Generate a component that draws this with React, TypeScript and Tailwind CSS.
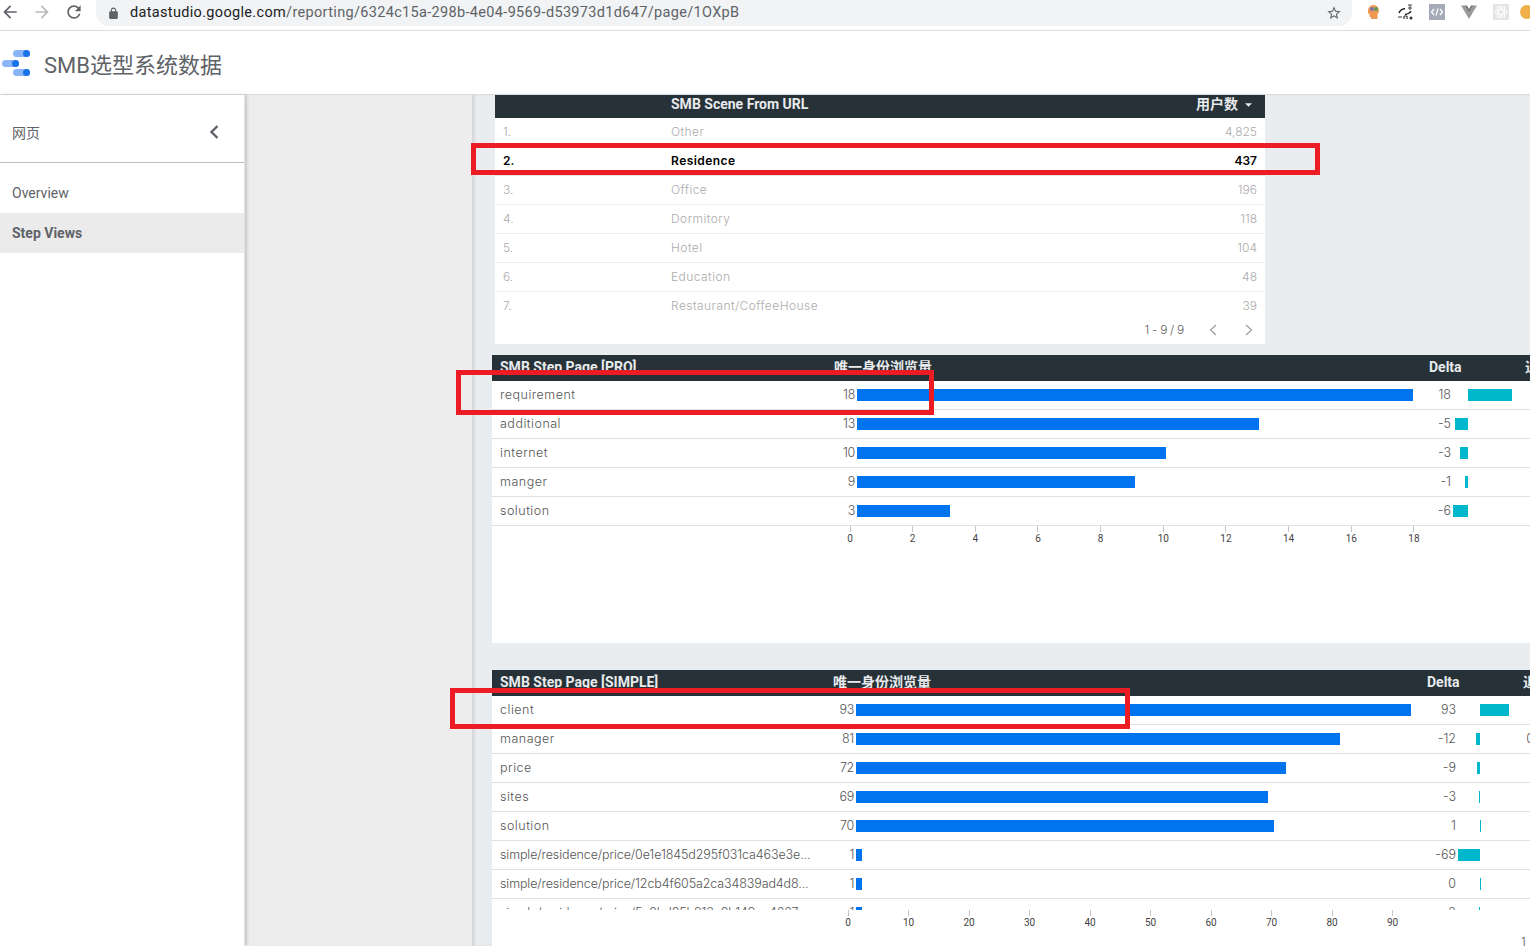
import React from "react";

type SceneRow = { rank: string; name: string; value: string };
type StepRow = { name: string; value: number; delta: number; extra?: string };

const cellFont = "font-['Inter','Noto_Sans',sans-serif] font-light";
const headFont =
  "font-['Roboto','Noto_Sans_CJK_SC',sans-serif] font-bold text-[14px] text-[#e8eaed]";

const sceneRows: SceneRow[] = [
  { rank: "1.", name: "Other", value: "4,825" },
  { rank: "2.", name: "Residence", value: "437" },
  { rank: "3.", name: "Office", value: "196" },
  { rank: "4.", name: "Dormitory", value: "118" },
  { rank: "5.", name: "Hotel", value: "104" },
  { rank: "6.", name: "Education", value: "48" },
  { rank: "7.", name: "Restaurant/CoffeeHouse", value: "39" },
];

const proRows: StepRow[] = [
  { name: "requirement", value: 18, delta: 18 },
  { name: "additional", value: 13, delta: -5 },
  { name: "internet", value: 10, delta: -3 },
  { name: "manger", value: 9, delta: -1 },
  { name: "solution", value: 3, delta: -6 },
];

const simpleRows: StepRow[] = [
  { name: "client", value: 93, delta: 93 },
  { name: "manager", value: 81, delta: -12, extra: "0" },
  { name: "price", value: 72, delta: -9 },
  { name: "sites", value: 69, delta: -3 },
  { name: "solution", value: 70, delta: 1 },
  { name: "simple/residence/price/0e1e1845d295f031ca463e3e...", value: 1, delta: -69 },
  { name: "simple/residence/price/12cb4f605a2ca34839ad4d8...", value: 1, delta: 0 },
  { name: "simple/residence/price/5c0bd05b813c0b149ca4667...", value: 1, delta: -2 },
];

const Material = ({ d, className }: { d: string; className: string }) => (
  <svg viewBox="0 0 24 24" className={className} fill="currentColor">
    <path d={d} />
  </svg>
);

const ChromeBar = () => (
  <div className="flex h-[31px] shrink-0 items-start border-b border-[#dadce0] bg-white">
    <Material
      className="mt-[2px] h-[20px] w-[20px] shrink-0 text-[#5f6368]"
      d="M20 11H7.83l5.59-5.59L12 4l-8 8 8 8 1.41-1.41L7.83 13H20v-2z"
    />
    <Material
      className="mt-[2px] ml-[12px] h-[20px] w-[20px] shrink-0 text-[#b8babd]"
      d="M12 4l-1.41 1.41L16.17 11H4v2h12.17l-5.58 5.59L12 20l8-8z"
    />
    <Material
      className="mt-[2px] ml-[12px] h-[20px] w-[20px] shrink-0 text-[#5f6368]"
      d="M17.65 6.35A7.958 7.958 0 0 0 12 4c-4.42 0-7.99 3.58-7.99 8s3.57 8 7.99 8c3.73 0 6.84-2.55 7.73-6h-2.08A5.99 5.99 0 0 1 12 18c-3.31 0-6-2.69-6-6s2.69-6 6-6c1.66 0 3.14.69 4.22 1.78L13 11h7V4l-2.35 2.35z"
    />
    <div className="ml-[12px] flex h-[26px] w-[1256px] shrink-0 items-center rounded-b-[13px] bg-[#f1f3f4] pr-[10px] pl-[11px]">
      <Material
        className="h-[13px] w-[13px] text-[#5f6368]"
        d="M18 8h-1V6c0-2.76-2.24-5-5-5S7 3.24 7 6v2H6c-1.1 0-2 .9-2 2v10c0 1.1.9 2 2 2h12c1.1 0 2-.9 2-2V10c0-1.1-.9-2-2-2zM9 6c0-1.66 1.34-3 3-3s3 1.34 3 3v2H9V6z"
      />
      <span className="ml-[10px] flex-1 font-['Roboto',sans-serif] text-[14.5px] tracking-[0.33px] whitespace-nowrap text-[#5f6368]">
        <span className="text-[#202124]">datastudio.google.com</span>
        /reporting/6324c15a-298b-4e04-9569-d53973d1d647/page/1OXpB
      </span>
      <Material
        className="h-[16px] w-[16px] text-[#5f6368]"
        d="M22 9.24l-7.19-.62L12 2 9.19 8.63 2 9.24l5.46 4.73L5.82 21 12 17.27 18.18 21l-1.63-7.03L22 9.24zM12 15.4l-3.76 2.27 1-4.28-3.32-2.88 4.38-.38L12 6.1l1.71 4.04 4.38.38-3.32 2.88 1 4.28L12 15.4z"
      />
    </div>
    <ExtensionIcons />
  </div>
);

const ExtensionIcons = () => (
  <div className="mt-[4px] ml-[13px] flex items-center gap-[16px]">
    <svg viewBox="0 0 16 16" className="h-[16px] w-[16px] shrink-0">
      <path d="M3 7c0-3.500 2.500-6 5.500-6S14 3.500 14 6.500c0 2-1 3-1.500 4V15H6v-2H4.500V10L3 9.500z" fill="#ee9a52" />
      <circle cx="7" cy="5" r="2" fill="#7d6fb0" />
      <circle cx="11" cy="5" r="2" fill="#5b9a57" />
    </svg>
    <svg viewBox="0 0 16 16" className="h-[16px] w-[16px] shrink-0" fill="none">
      <path d="M2 9c1-3 3-4 6-4.500M14 7c-1 2-3 3-6 3.500" stroke="#222" strokeWidth="1.500" />
      <path d="M11 1h4M13 1v5M11 4h4" stroke="#444" strokeWidth="1" />
      <path d="M1 13h4M7 12v3M10 12v3M7 12h3" stroke="#333" strokeWidth="1.200" />
      <circle cx="14" cy="14" r="1.500" fill="#333" />
    </svg>
    <svg viewBox="0 0 16 16" className="h-[16px] w-[16px] shrink-0" fill="none">
      <rect width="16" height="16" fill="#a5abb8" />
      <path d="M5 5L2.500 8 5 11M11 5l2.500 3L11 11M9 4.500L7 11.500" stroke="#fff" strokeWidth="1.200" />
    </svg>
    <svg viewBox="0 0 16 16" className="h-[16px] w-[16px] shrink-0">
      <path d="M0 1.500h3.500L8 9l4.500-7.500H16L8 15z" fill="#9a9a9a" />
      <path d="M3.500 1.500h2.500L8 5l2-3.500h2.500L8 9z" fill="#777" />
    </svg>
    <svg viewBox="0 0 16 16" className="h-[16px] w-[16px] shrink-0" fill="none">
      <rect width="16" height="16" fill="#e4e4e4" />
      <ellipse cx="8" cy="8" rx="6" ry="2.500" stroke="#fff" />
      <ellipse cx="8" cy="8" rx="6" ry="2.500" stroke="#fff" transform="rotate(60 8 8)" />
      <ellipse cx="8" cy="8" rx="6" ry="2.500" stroke="#fff" transform="rotate(120 8 8)" />
    </svg>
    <svg viewBox="0 0 16 16" className="-ml-[6px] h-[16px] w-[16px] shrink-0">
      <circle cx="8" cy="8" r="7" fill="#efb04a" />
    </svg>
  </div>
);

const Logo = () => (
  <svg viewBox="0 0 30 28" className="h-[28px] w-[30px]">
    <rect x="13" y="1" width="17" height="7" rx="3.500" fill="#8ab4f8" />
    <circle cx="26.500" cy="4.500" r="3.500" fill="#1a73e8" />
    <rect x="2" y="11" width="17" height="7" rx="3.500" fill="#8ab4f8" />
    <circle cx="15.500" cy="14.500" r="3.500" fill="#1a73e8" />
    <rect x="13" y="20" width="17" height="7" rx="3.500" fill="#8ab4f8" />
    <circle cx="26.500" cy="23.500" r="3.500" fill="#1a73e8" />
  </svg>
);

const ReportHeader = () => (
  <div className="flex h-[64px] shrink-0 items-center border-b border-[#dadce0] bg-white">
    <Logo />
    <h1 className="mt-[6px] ml-[14px] font-['Roboto','Noto_Sans_CJK_SC',sans-serif] text-[22px] font-normal text-[#5f6368]">
      SMB选型系统数据
    </h1>
  </div>
);

const Sidebar = () => (
  <aside className="relative z-10 w-[245px] shrink-0 border-r border-[#e2e2e2] bg-white font-['Roboto','Noto_Sans_CJK_SC',sans-serif] text-[14px] text-[#5f6368] shadow-[2px_0_3px_rgba(0,0,0,0.16)]">
    <div className="flex h-[68px] items-center justify-between border-b border-[#bdbdbd] pt-[8px] pr-[24px] pl-[12px]">
      <span className="translate-y-[1px]">网页</span>
      <svg viewBox="0 0 12 16" className="h-[16px] w-[12px] -translate-y-[1px]" fill="none">
        <path d="M9.500 2L3.500 8l6 6" stroke="#5f6368" strokeWidth="2.400" />
      </svg>
    </div>
    <div className="mt-[10px] flex h-[40px] items-center pl-[12px]">Overview</div>
    <div className="flex h-[40px] items-center bg-[#ebebeb] pl-[12px] font-bold">Step Views</div>
  </aside>
);

const SceneTable = () => (
  <section className="ml-[22px] w-[770px] bg-white">
    <div className={`flex h-[23px] items-center bg-[#263238] pb-[4px] ${headFont}`}>
      <span className="ml-[176px] flex-1">SMB Scene From URL</span>
      <span>用户数</span>
      <svg viewBox="0 0 8 4" className="mr-[13px] ml-[7px] h-[4px] w-[7px]">
        <path d="M0 0h8L4 4z" fill="#e8eaed" />
      </svg>
    </div>
    {sceneRows.map((row, i) => (
      <div
        key={row.rank}
        className={`flex h-[29px] items-center border-b px-[8px] text-[12px] ${
          i === 1
            ? "border-[#e6e6e6] font-['Inter',sans-serif] font-semibold text-black"
            : `${cellFont} ${i === 6 ? "border-transparent" : "border-[#eeeeee]"} text-[#ababab]`
        }`}
      >
        <span className="w-[168px]">{row.rank}</span>
        <span className="flex-1 tracking-[0.45px]">{row.name}</span>
        <span>{row.value}</span>
      </div>
    ))}
    <div className={`flex h-[23px] items-center justify-end pb-[6px] text-[#616161] ${cellFont}`}>
      <span className="text-[12px] tracking-[-0.3px]">1 - 9 / 9</span>
      <svg viewBox="0 0 10 14" className="ml-[24px] h-[14px] w-[10px]" fill="none">
        <path d="M8 2L2.500 7 8 12" stroke="#9e9e9e" strokeWidth="1.200" />
      </svg>
      <svg viewBox="0 0 10 14" className="mr-[11px] ml-[26px] h-[14px] w-[10px]" fill="none">
        <path d="M2 2l5.500 5L2 12" stroke="#9e9e9e" strokeWidth="1.200" />
      </svg>
    </div>
  </section>
);

type StepTableProps = {
  title: string;
  rows: StepRow[];
  scale: number;
  deltaScale: number;
  ticks: number[];
  labelCol: string;
  barCol: string;
  deltaCol: string;
  negCol: string;
  headDelta: string;
  rowsBox: string;
  axisOffset: string;
  tickCell: string;
  sectionBox: string;
  trailing?: React.ReactNode;
};

const StepTable = ({
  title,
  rows,
  scale,
  deltaScale,
  ticks,
  labelCol,
  barCol,
  deltaCol,
  negCol,
  headDelta,
  rowsBox,
  axisOffset,
  tickCell,
  sectionBox,
  trailing,
}: StepTableProps) => (
  <section className={`ml-[19px] w-[1060px] bg-white ${sectionBox}`}>
    <div className={`flex h-[26px] items-center bg-[#263238] pb-[2px] whitespace-nowrap ${headFont}`}>
      <div className={`flex shrink-0 justify-between pl-[8px] ${labelCol}`}>
        <span>{title}</span>
        <span className="mr-[-77px]">唯一身份浏览量</span>
      </div>
      <span className={headDelta}>Delta</span>
      <span className="ml-[64px]">退</span>
    </div>
    <div className={`overflow-hidden ${rowsBox}`}>
      {rows.map((row) => (
        <div
          key={row.name}
          className={`flex h-[29px] items-center border-b border-[#e0e0e0] text-[12.5px] whitespace-nowrap text-[#555] ${cellFont}`}
        >
          <div className={`flex shrink-0 justify-between pl-[8px] ${labelCol}`}>
            <span className={row.name.length > 30 ? "tracking-[-0.11px]" : "tracking-[0.5px]"}>
              {row.name}
            </span>
            <span className="tracking-[-0.3px]">{row.value}</span>
          </div>
          <div className={`ml-[2px] shrink-0 ${barCol}`}>
            <div className="h-[12px] bg-[#0073ee]" style={{ width: row.value * scale }} />
          </div>
          <span className={`shrink-0 text-right ${deltaCol}`}>{row.delta}</span>
          <div className={`flex shrink-0 justify-end ${negCol}`}>
            {row.delta < 0 && (
              <div
                className="h-[12px] bg-[#00b8cc]"
                style={{ width: Math.ceil(-row.delta * deltaScale) }}
              />
            )}
          </div>
          {row.delta >= 0 && (
            <div
              className="h-[12px] bg-[#00b8cc]"
              style={{ width: Math.max(1, row.delta * deltaScale) }}
            />
          )}
          {row.extra && <span className="mr-[18px] ml-auto">{row.extra}</span>}
        </div>
      ))}
    </div>
    <div className={`flex ${axisOffset}`}>
      {ticks.map((tick) => (
        <div key={tick} className={`flex flex-col items-center ${tickCell}`}>
          <div className="h-[6px] w-px bg-[#c4c4c4]" />
          <span className="mt-[1px] font-['Roboto',sans-serif] text-[10px] leading-[12px] text-[#444]">
            {tick}
          </span>
        </div>
      ))}
    </div>
    {trailing}
  </section>
);

const Frame = ({ box }: { box: string }) => (
  <div className={`pointer-events-none absolute z-20 border-[5px] border-[#ed1c24] ${box}`} />
);

const App: React.FC = () => (
  <div className="relative flex h-[946px] w-[1530px] flex-col overflow-hidden bg-white">
    <ChromeBar />
    <ReportHeader />
    <div className="flex min-h-0 flex-1">
      <Sidebar />
      <div className="w-[227px] shrink-0 bg-[#ededed]" />
      <main className="min-w-0 flex-1 overflow-hidden border-l border-[#d8d8d8] bg-[#e9edf0] shadow-[inset_2px_0_2px_rgba(0,0,0,0.08)]">
        <SceneTable />
        <div className="mt-[11px]">
          <StepTable
            title="SMB Step Page [PRO]"
            rows={proRows}
            scale={30.9}
            deltaScale={2.44}
            ticks={[0, 2, 4, 6, 8, 10, 12, 14, 16, 18]}
            labelCol="w-[363px]"
            barCol="w-[572px]"
            deltaCol="w-[22px]"
            negCol="w-[17px]"
            headDelta="ml-[574px] w-[32px]"
            rowsBox="h-[145px]"
            axisOffset="pl-[326.7px]"
            tickCell="w-[62.67px] shrink-0"
            sectionBox="h-[288px]"
          />
        </div>
        <div className="mt-[27px]">
          <StepTable
            title="SMB Step Page [SIMPLE]"
            rows={simpleRows}
            scale={5.97}
            deltaScale={0.315}
            ticks={[0, 10, 20, 30, 40, 50, 60, 70, 80, 90]}
            labelCol="w-[362px]"
            barCol="w-[570px]"
            deltaCol="w-[30px]"
            negCol="w-[24px]"
            headDelta="ml-[573px] w-[32px]"
            rowsBox="h-[214px]"
            axisOffset="pl-[325.75px]"
            tickCell="w-[60.5px] shrink-0"
            sectionBox="h-[300px]"
            trailing={
              <div className={`mt-[4px] pl-[1029px] text-[12px] text-[#555] ${cellFont}`}>1</div>
            }
          />
        </div>
      </main>
    </div>
    <Frame box="top-[143px] left-[471px] h-[32px] w-[849px]" />
    <Frame box="top-[370px] left-[456px] h-[45px] w-[478px]" />
    <Frame box="top-[688px] left-[450px] h-[41px] w-[680px]" />
  </div>
);

export default App;
